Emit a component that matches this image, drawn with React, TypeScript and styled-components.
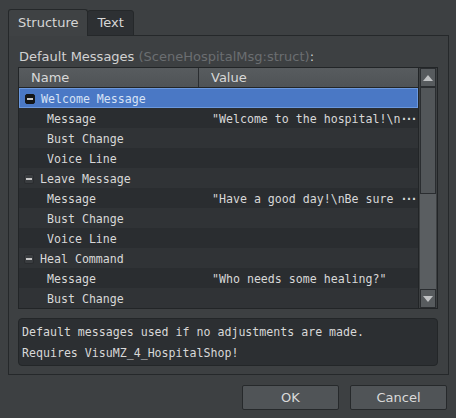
import styled, { createGlobalStyle } from "styled-components";

const GlobalStyle = createGlobalStyle`
  html, body {
    margin: 0;
    padding: 0;
    background: #3d4042;
  }
  * {
    box-sizing: border-box;
  }
`;

interface Row {
  name: string;
  value?: string;
  elided?: boolean;
  parent?: boolean;
}

const rows: Row[] = [
  { name: "Welcome Message", parent: true },
  { name: "Message", value: "\"Welcome to the hospital!\\n", elided: true },
  { name: "Bust Change" },
  { name: "Voice Line" },
  { name: "Leave Message", parent: true },
  { name: "Message", value: "\"Have a good day!\\nBe sure ", elided: true },
  { name: "Bust Change" },
  { name: "Voice Line" },
  { name: "Heal Command", parent: true },
  { name: "Message", value: "\"Who needs some healing?\"" },
  { name: "Bust Change" },
];

const App = () => {
  return (
    <Window>
      <GlobalStyle />
      <TabBar>
        <Tab $active>Structure</Tab>
        <Tab>Text</Tab>
        <TabFill />
      </TabBar>
      <Panel>
        <Title>
          Default Messages <Hint>(SceneHospitalMsg:struct)</Hint>:
        </Title>
        <Table>
          <TableBody>
            <HeaderRow>
              <HeaderCell>Name</HeaderCell>
              <HeaderCell $last>Value</HeaderCell>
            </HeaderRow>
            {rows.map((row, i) => (
              <TreeRow key={i} $selected={i === 0} $odd={i % 2 === 1}>
                <NameCell $parent={row.parent}>
                  {row.parent && (
                    <Expander $selected={i === 0}>
                      <Minus />
                    </Expander>
                  )}
                  {row.name}
                </NameCell>
                <ValueCell>
                  {row.value}
                  {row.elided && <Elide>···</Elide>}
                </ValueCell>
              </TreeRow>
            ))}
          </TableBody>
          <ScrollBar>
            <ScrollButton>
              <Arrow $up />
            </ScrollButton>
            <Track>
              <Thumb />
            </Track>
            <ScrollButton>
              <Arrow />
            </ScrollButton>
          </ScrollBar>
        </Table>
        <Description>
          Default messages used if no adjustments are made.
          <br />
          Requires VisuMZ_4_HospitalShop!
        </Description>
      </Panel>
      <Buttons>
        <Button>OK</Button>
        <Button>Cancel</Button>
      </Buttons>
    </Window>
  );
};

const Window = styled.div`
  width: 456px;
  height: 418px;
  display: flex;
  flex-direction: column;
  padding: 9px 7px 0 8px;
  font-family: "DejaVu Sans", "Liberation Sans", sans-serif;
  font-size: 13px;
  color: #d4d4d4;
`;

const TabBar = styled.div`
  display: flex;
  align-items: flex-end;
  height: 27px;
`;

const Tab = styled.div<{ $active?: boolean }>`
  height: ${({ $active }) => ($active ? "27px" : "26px")};
  padding: 0 9px;
  display: flex;
  align-items: center;
  background: ${({ $active }) => ($active ? "#3f4244" : "#2d3033")};
  border: 1px solid #25282a;
  border-bottom: ${({ $active }) => ($active ? "none" : "1px solid #25282a")};
  border-radius: 3px 3px 0 0;
  margin-right: -1px;
  color: #d6d6d6;
  padding-bottom: ${({ $active }) => ($active ? "1px" : "2px")};
`;

const TabFill = styled.div`
  flex: 1;
  border-bottom: 1px solid #25282a;
`;

const Panel = styled.div`
  height: 339px;
  border: 1px solid #25282a;
  border-top: none;
  padding: 11px 10px 0 9px;
  display: flex;
  flex-direction: column;
`;

const Title = styled.div`
  height: 20px;
  line-height: 19px;
  margin-left: 1px;
  color: #d2d2d2;
`;

const Hint = styled.span`
  color: #6b6e71;
`;

const Table = styled.div`
  display: flex;
  height: 242px;
  border: 1px solid #222527;
  background: #2a2d30;
`;

const TableBody = styled.div`
  flex: 1;
  display: flex;
  flex-direction: column;
  overflow: hidden;
`;

const HeaderRow = styled.div`
  display: grid;
  grid-template-columns: 180px 1fr;
  height: 20px;
  background: linear-gradient(#585c5f, #4f5356);
  border-bottom: 1px solid #222527;
`;

const HeaderCell = styled.div<{ $last?: boolean }>`
  padding-left: 12px;
  line-height: 19px;
  color: #d8d8d8;
  border-right: ${({ $last }) => ($last ? "none" : "1px solid #2a2d30")};
`;

const TreeRow = styled.div<{ $selected?: boolean; $odd?: boolean }>`
  display: grid;
  grid-template-columns: 180px 1fr;
  height: 20px;
  align-items: center;
  padding-top: 1px;
  font-family: "DejaVu Sans Mono", "Liberation Mono", monospace;
  font-size: 11.6px;
  white-space: pre;
  color: ${({ $selected }) => ($selected ? "#d6e2f6" : "#d8d8d8")};
  background: ${({ $selected, $odd }) =>
    $selected ? "#4a78c5" : $odd ? "#2a2d30" : "#303336"};
  border: ${({ $selected }) => ($selected ? "1px solid #6b98de" : "none")};
`;

const NameCell = styled.div<{ $parent?: boolean }>`
  display: flex;
  align-items: center;
  padding-left: ${({ $parent }) => ($parent ? "5px" : "28px")};
  gap: 6px;
  overflow: hidden;
`;

const Expander = styled.span<{ $selected?: boolean }>`
  width: 10px;
  height: 10px;
  border-radius: 2px;
  display: flex;
  align-items: center;
  justify-content: center;
  background: ${({ $selected }) => ($selected ? "#141618" : "#3a3d40")};
  border: 1px solid ${({ $selected }) => ($selected ? "#141618" : "#2a2c2f")};
`;

const Minus = styled.span`
  width: 6px;
  height: 2px;
  background: #c8c8c8;
`;

const ValueCell = styled.div`
  padding-left: 13px;
  overflow: hidden;
`;

const Elide = styled.span`
  letter-spacing: -2px;
  font-weight: bold;
`;

const ScrollBar = styled.div`
  width: 19px;
  display: flex;
  flex-direction: column;
  background: #3d4042;
  border-left: 1px solid #222527;
  padding: 0 1px;
`;

const ScrollButton = styled.div`
  height: 19px;
  display: flex;
  align-items: center;
  justify-content: center;
  background: #575b5e;
  border: 1px solid #2a2d30;
`;

const Arrow = styled.span<{ $up?: boolean }>`
  width: 0;
  height: 0;
  border-left: 5px solid transparent;
  border-right: 5px solid transparent;
  ${({ $up }) =>
    $up ? "border-bottom: 6px solid #c0c2c4;" : "border-top: 6px solid #c0c2c4;"}
`;

const Track = styled.div`
  flex: 1;
  background: #5a5e61;
  display: flex;
  flex-direction: column;
`;

const Thumb = styled.div`
  height: 107px;
  background: #525659;
  border: 1px solid #2a2d30;
`;

const Description = styled.div`
  margin-top: 9px;
  height: 48px;
  padding: 3px 3px 0;
  background: #2c2f32;
  border: 1px solid #232628;
  border-radius: 4px;
  font-family: "DejaVu Sans Mono", "Liberation Mono", monospace;
  font-size: 11.6px;
  line-height: 21px;
  color: #d8d8d8;
  white-space: pre;
`;

const Buttons = styled.div`
  display: flex;
  justify-content: flex-end;
  gap: 11px;
  margin-top: 10px;
  padding-right: 2px;
`;

const Button = styled.div`
  width: 97px;
  height: 25px;
  display: flex;
  align-items: center;
  justify-content: center;
  background: #505457;
  border: 1px solid #26292b;
  border-radius: 2px;
  color: #dadada;
`;

export default App;
